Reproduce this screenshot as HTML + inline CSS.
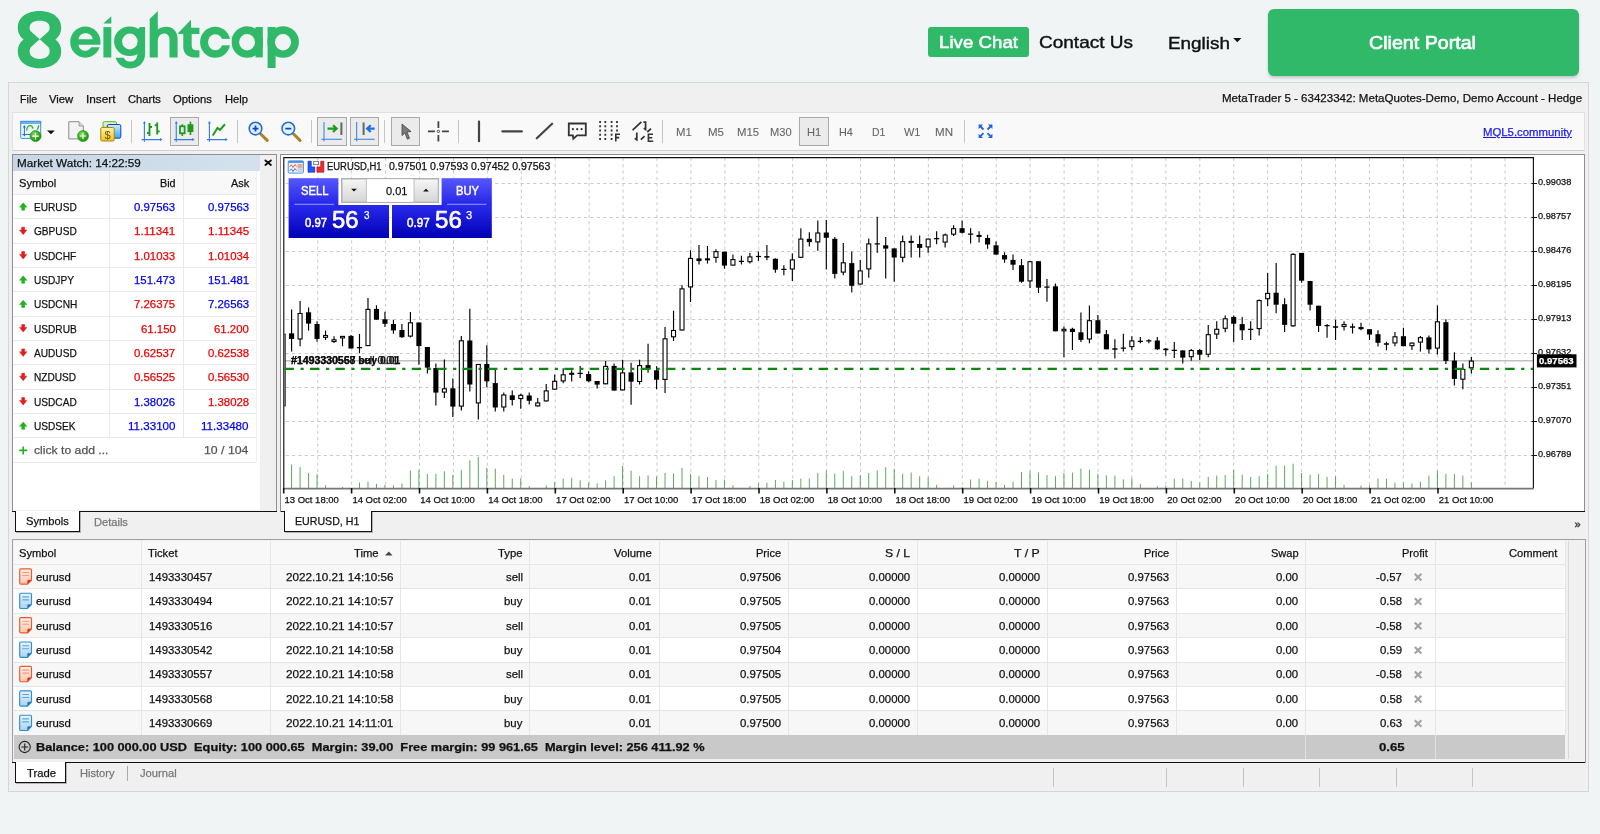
<!DOCTYPE html>
<html><head><meta charset="utf-8"><style>
html,body{margin:0;padding:0;}
body{width:1600px;height:834px;position:relative;overflow:hidden;background:#f0f4f5;font-family:"Liberation Sans",sans-serif;}
.t{position:absolute;white-space:pre;line-height:1;transform-origin:0 0;-webkit-text-stroke:0.25px currentColor;}
svg{display:block}
</style></head><body><div id="root" style="position:absolute;left:0;top:0;width:1600px;height:834px;will-change:transform;">
<svg style="position:absolute;left:0px;top:0px" width="320" height="80" viewBox="0 0 320 80"><g fill="#31b96a">
<path fill-rule="evenodd" d="M23.6,39.5 C18.5,35.5 17.8,31 17.8,27.5 C17.8,17 27.5,10.9 39.5,10.9 C51.5,10.9 61.2,17 61.2,27.5 C61.2,31 60.5,35.5 55.4,39.5 C60.5,43.5 61.2,48 61.2,51.5 C61.2,62 51.5,68.2 39.5,68.2 C27.5,68.2 17.8,62 17.8,51.5 C17.8,48 18.5,43.5 23.6,39.5 Z
M39.7,39.3 L31.3,31.8 C29,29.5 29.2,25.5 31.2,23.4 C33.5,21 36.5,20.7 39.6,20.7 C42.7,20.7 45.8,21 48.1,23.4 C50.1,25.5 50.3,29.5 48.1,31.8 Z
M39.7,39.3 L31.3,46.8 C29,49 29.2,53.6 31.2,55.8 C33.5,58.3 36.5,59 39.6,59 C42.7,59 45.8,58.3 48.1,55.8 C50.1,53.6 50.3,49 48.1,46.8 Z"/>
<ellipse cx="85.35" cy="42.05" rx="15.15" ry="15.65"/>
<rect x="103.4" y="27.1" width="7.9" height="30.4"/>
<path d="M103.4,23.5 L111.3,23.5 L111.3,16.2 Z"/>
<ellipse cx="129.6" cy="41.2" rx="15.5" ry="14.8"/>
<path d="M137.3,30 L140.2,27.1 H145.1 V54 C145.1,63 138,68.5 130,68.5 C123,68.5 117.5,64 115.6,57.7 H123.6 C125,60.3 127.5,61.6 130.2,61.6 C134.5,61.6 137.3,58.5 137.3,54.4 Z"/>
<path d="M149.7,19.1 L157.8,11 V29.5 C159.8,27.6 163,26.8 166.3,26.8 C172.8,26.8 177.6,31.5 177.6,38.5 V57.4 H169.5 V39.5 C169.5,35.7 167.4,33.5 164.3,33.5 C160.5,33.5 157.8,36.5 157.8,41 V57.4 H149.7 Z"/>
<path d="M178.2,33.9 V32.9 L191,19.8 V27.8 H199.4 V33.9 H191.7 V45.6 C191.7,48.5 193,50.3 195.7,50.3 H199.4 V57.4 H194 C187.5,57.4 183.3,53 183.3,47 V33.9 Z"/>
<ellipse cx="215.2" cy="42.25" rx="15.1" ry="15.45"/>
<ellipse cx="247.3" cy="42" rx="15.8" ry="15.75"/>
<rect x="255.5" y="27" width="7.3" height="30.4"/>
<ellipse cx="283.1" cy="42" rx="15.8" ry="15.75"/>
<rect x="267.6" y="27" width="8" height="41"/>
</g>
<g fill="#f0f4f5">
<path d="M78.6,39.2 C78.6,35.8 81.8,33.2 85.6,33.2 C89.4,33.2 92.6,35.8 92.6,39.2 Z"/>
<path d="M78.6,44.7 H101 V47.3 H91.2 C89.8,49.5 87.8,50.8 85.5,50.8 C81.8,50.8 78.6,48.2 78.6,44.7 Z"/>
<ellipse cx="129.85" cy="41.5" rx="7.75" ry="7.9"/>
<ellipse cx="215.35" cy="42.25" rx="7.3" ry="8.05"/>
<rect x="221.5" y="38.9" width="10" height="6.4"/>
<ellipse cx="247.05" cy="42.2" rx="7.95" ry="8.2"/>
<ellipse cx="283" cy="42.2" rx="8.1" ry="8.2"/>
</g></svg>
<div style="position:absolute;left:928px;top:26.7px;width:101px;height:30.8px;background:#31b96a;border-radius:3px;"></div>
<span class="t" style="left:939.40px;top:35.00px;font-size:16.6px;color:#fff;transform:scaleX(1.1265);-webkit-text-stroke:0.5px #fff;">Live Chat</span>
<span class="t" style="left:1038.70px;top:35.00px;font-size:16.6px;color:#111;transform:scaleX(1.1448);-webkit-text-stroke:0.4px #111;">Contact Us</span>
<span class="t" style="left:1167.90px;top:36.00px;font-size:16.6px;color:#111;transform:scaleX(1.1387);-webkit-text-stroke:0.4px #111;">English</span>
<svg style="position:absolute;left:1230px;top:35px" width="14" height="10" viewBox="1230 35 14 10"><path d="M1233.2,38 L1241.4,38 L1237.3,42.2 Z" fill="#111"/></svg>
<div style="position:absolute;left:1267.5px;top:9px;width:311.5px;height:66.5px;background:#31b96a;border-radius:6px;box-shadow:0 2px 3px rgba(0,0,0,0.18);"></div>
<span class="t" style="left:1369.30px;top:34.00px;font-size:18.4px;color:#fff;transform:scaleX(1.0676);-webkit-text-stroke:0.6px #fff;">Client Portal</span>
<div style="position:absolute;left:7.5px;top:82px;width:1579.5px;height:708px;background:#f0f0f0;border:1px solid #d6d6d6;"></div>
<span class="t" style="left:19.80px;top:93.00px;font-size:11.6px;color:#111;transform:scaleX(0.9202);">File</span>
<span class="t" style="left:49.20px;top:93.00px;font-size:11.6px;color:#111;transform:scaleX(0.9705);">View</span>
<span class="t" style="left:86.10px;top:93.00px;font-size:11.6px;color:#111;transform:scaleX(1.0203);">Insert</span>
<span class="t" style="left:128.00px;top:93.00px;font-size:11.6px;color:#111;transform:scaleX(0.9629);">Charts</span>
<span class="t" style="left:173.00px;top:93.00px;font-size:11.6px;color:#111;transform:scaleX(0.9756);">Options</span>
<span class="t" style="left:224.70px;top:93.00px;font-size:11.6px;color:#111;transform:scaleX(0.9682);">Help</span>
<span class="t" style="left:1221.50px;top:92.00px;font-size:11.6px;color:#111;transform:scaleX(0.9955);">MetaTrader 5 - 63423342: MetaQuotes-Demo, Demo Account - Hedge</span>
<div style="position:absolute;left:12px;top:112px;width:1571px;height:36.5px;background:#f9f9f9;border:1px solid #e1e1e1;border-bottom:1px solid #d0d0d0;"></div>
<div style="position:absolute;left:170px;top:117px;width:26.75px;height:27px;background:#ebebeb;border:1px solid #a9a9a9;"></div>
<div style="position:absolute;left:317.2px;top:117px;width:27.5px;height:27px;background:#ebebeb;border:1px solid #a9a9a9;"></div>
<div style="position:absolute;left:350.2px;top:117px;width:26.600000000000023px;height:27px;background:#ebebeb;border:1px solid #a9a9a9;"></div>
<div style="position:absolute;left:391.1px;top:117px;width:26.69999999999999px;height:27px;background:#ebebeb;border:1px solid #a9a9a9;"></div>
<div style="position:absolute;left:799.3px;top:117px;width:27.300000000000068px;height:27px;background:#ebebeb;border:1px solid #a9a9a9;"></div>
<div style="position:absolute;left:130.8px;top:120px;width:1px;height:23px;background:#c6c6c6;"></div>
<div style="position:absolute;left:237.1px;top:120px;width:1px;height:23px;background:#c6c6c6;"></div>
<div style="position:absolute;left:310.7px;top:120px;width:1px;height:23px;background:#c6c6c6;"></div>
<div style="position:absolute;left:384.1px;top:120px;width:1px;height:23px;background:#c6c6c6;"></div>
<div style="position:absolute;left:458.0px;top:120px;width:1px;height:23px;background:#c6c6c6;"></div>
<div style="position:absolute;left:662.0px;top:120px;width:1px;height:23px;background:#c6c6c6;"></div>
<div style="position:absolute;left:964.2px;top:120px;width:1px;height:23px;background:#c6c6c6;"></div>
<svg style="position:absolute;left:12px;top:113px" width="1000" height="36" viewBox="12 113 1000 36">
<!-- new chart -->
<defs><radialGradient id="gc" cx="0.4" cy="0.35" r="0.7"><stop offset="0" stop-color="#8ee05a"/><stop offset="0.6" stop-color="#2fa81f"/><stop offset="1" stop-color="#1b8a12"/></radialGradient></defs>
<rect x="20.7" y="121.4" width="20" height="17" rx="1" fill="#edf5fc" stroke="#3a8ee6" stroke-width="1"/>
<rect x="20.2" y="120.9" width="21" height="2.8" fill="#3a8ee6"/>
<rect x="21.2" y="121.9" width="19" height="0.8" fill="#8fc0f2"/>
<path d="M24.4,126 V135.6 M22.4,134.5 H32.5" stroke="#2a6fc9" stroke-width="1.05" fill="none"/>
<path d="M22.9,127.4 L24.4,125 L25.9,127.4 Z M22.9,134.3 L24.4,136.6 L25.9,134.3 Z" fill="#2a6fc9"/>
<path d="M26.6,130.6 C27,126.5 29,125.6 30.2,125.6 C31.6,125.6 32.6,126.8 33.1,128.6 M37.3,129.8 L38.9,125.3" stroke="#3cae28" stroke-width="1.35" fill="none"/>
<circle cx="35.5" cy="136.1" r="5.5" fill="url(#gc)" stroke="#1f8f18" stroke-width="0.6"/>
<path d="M35.5,132.8 V139.4 M32.2,136.1 H38.8" stroke="#fff" stroke-width="1.1"/>
<path d="M47,130.5 L54.9,130.5 L50.95,134.3 Z" fill="#111"/>
<!-- new doc -->
<path d="M68.8,121.7 H79 L83.3,126 V138.9 H68.8 Z" fill="#f3f3f3" stroke="#8a8a8a" stroke-width="1"/>
<path d="M79,121.7 V126 H83.3" fill="#ddd" stroke="#8a8a8a" stroke-width="0.8"/>
<circle cx="83" cy="136" r="5.5" fill="url(#gc)" stroke="#1f8f18" stroke-width="0.6"/>
<path d="M83,132.7 V139.3 M79.7,136 H86.3" stroke="#fff" stroke-width="1.1"/>
<!-- dollar -->
<defs>
<linearGradient id="gy" x1="0" y1="0" x2="0" y2="1"><stop offset="0" stop-color="#fff3a8"/><stop offset="1" stop-color="#f2c21a"/></linearGradient>
<linearGradient id="gbl" x1="0" y1="0" x2="0" y2="1"><stop offset="0" stop-color="#c8f0ff"/><stop offset="1" stop-color="#3aa6f0"/></linearGradient>
<linearGradient id="ggr" x1="0" y1="0" x2="0" y2="1"><stop offset="0" stop-color="#e2f7d6"/><stop offset="1" stop-color="#9fdc84"/></linearGradient>
</defs>
<rect x="103" y="121.7" width="13.5" height="10.5" rx="1.5" fill="url(#ggr)" stroke="#4cb53a" stroke-width="1"/>
<rect x="107.3" y="124.5" width="13.5" height="13.7" rx="1.5" fill="url(#gbl)" stroke="#1f3fb0" stroke-width="1"/>
<rect x="100.75" y="127.5" width="13.5" height="13.5" rx="1.5" fill="url(#gy)" stroke="#a8841a" stroke-width="1"/>
<text x="107.5" y="138.8" font-size="11" font-family="Liberation Sans" fill="#6b5410" text-anchor="middle">$</text>
<!-- bar chart -->
<g stroke="#2f7de6" stroke-width="1.1" fill="#2f7de6">
<path d="M144.4,122 V141.7 M141.6,139.6 H161.5" fill="none"/>
<path d="M142.9,123.5 L144.4,121 L145.9,123.5 Z M160,138.1 L162.5,139.6 L160,141.1 Z" stroke="none"/>
</g>
<path d="M149.5,123 V136 M147,133 H149.5 M149.5,127 H152 M157.2,122.4 V134.6 M154.7,125.2 H157.2 M157.2,131.4 H159.7" stroke="#1f9a1f" stroke-width="1.9" fill="none"/>
<!-- candle chart -->
<g stroke="#2f7de6" stroke-width="1.1" fill="#2f7de6">
<path d="M176.25,122 V141.7 M174,139.6 H193.5" fill="none"/>
<path d="M174.75,123.5 L176.25,121 L177.75,123.5 Z M192.2,138.1 L194.7,139.6 L192.2,141.1 Z" stroke="none"/>
</g>
<path d="M182.3,124.2 V136" stroke="#1f9a1f" stroke-width="1.6"/>
<rect x="180" y="126.3" width="4.6" height="7" fill="#ebebeb" stroke="#1f9a1f" stroke-width="1.8"/>
<path d="M190.45,121.7 V135" stroke="#1f9a1f" stroke-width="1.6"/>
<rect x="187.5" y="124.25" width="5.9" height="7.8" fill="#1f9a1f"/>
<!-- line chart -->
<g stroke="#2f7de6" stroke-width="1.1" fill="#2f7de6">
<path d="M209.4,122 V141.7 M207,139.6 H226.8" fill="none"/>
<path d="M207.9,123.5 L209.4,121 L210.9,123.5 Z M225.3,138.1 L227.8,139.6 L225.3,141.1 Z" stroke="none"/>
</g>
<path d="M212.8,135.5 L217.5,128 L220,129.9 L225,124.25" stroke="#1f9a1f" stroke-width="2" fill="none"/>
<!-- zoom in/out -->
<path d="M260.5,133.8 L267.2,140.4 M293.3,133.8 L300,140.4" stroke="#a9822a" stroke-width="3" stroke-linecap="round"/>
<circle cx="255.5" cy="128.6" r="6.3" fill="#e3f1fb" stroke="#1f6fd8" stroke-width="1.6"/>
<circle cx="288.3" cy="128.6" r="6.3" fill="#e3f1fb" stroke="#1f6fd8" stroke-width="1.6"/>
<path d="M252.5,128.6 H258.5 M255.5,125.6 V131.6 M285.3,128.6 H291.3" stroke="#1245b8" stroke-width="1.8"/>
<!-- scroll buttons -->
<g stroke="#2f7de6" stroke-width="1" fill="none">
<path d="M324,122 V141.4 M321.3,139.25 H341.9 M356.7,122 V141.4 M354,139.25 H374.6"/>
</g>
<path d="M327.5,128.6 H336 M333,125.2 L336.6,128.6 L333,132" stroke="#1a9e1a" stroke-width="2.2" fill="none"/>
<path d="M341.4,122.5 V135" stroke="#666" stroke-width="2"/>
<path d="M363.6,122.5 V135" stroke="#666" stroke-width="2"/>
<path d="M374.7,128.6 H367.5 M370.7,125.2 L367.1,128.6 L370.7,132" stroke="#1f6fe0" stroke-width="2.2" fill="none"/>
<!-- cursor -->
<path d="M402,124 L411,131.5 L407,132 L409.5,138.3 L407.4,139.2 L404.9,133 L402,135.6 Z" fill="#7a7a7a" stroke="#444" stroke-width="0.8"/>
<!-- crosshair -->
<path d="M438.4,121.3 V127.9 M438.4,134.9 V141.4 M427.9,131.4 H434.9 M441.9,131.4 H448.9" stroke="#444" stroke-width="1.8"/>
<circle cx="438.4" cy="131.4" r="1.2" fill="none" stroke="#444" stroke-width="1"/>
<!-- lines -->
<path d="M479,121.5 V141.2 M502.4,131.4 H521.8 M536.8,138.2 L552.1,123.7" stroke="#444" stroke-width="2.2" stroke-linecap="round"/>
<!-- bubble -->
<path d="M568.8,123.5 H585.8 V135.4 H577.2 L573.3,138.8 L572.9,135.4 H568.8 Z" fill="none" stroke="#333" stroke-width="1.8"/>
<g fill="#333"><circle cx="572.9" cy="129.2" r="1.1"/><circle cx="577.2" cy="129.2" r="1.1"/><circle cx="581.6" cy="129.2" r="1.1"/></g>
<!-- fib -->
<path d="M600.1,121 V141 M605.3,121 V141 M611.6,121 V141 M617,121 V131.5" stroke="#333" stroke-width="1.8" stroke-dasharray="2.05,2.18"/>
<path d="M615.8,141.5 V134.2 H620 M615.8,137.6 H619.3" stroke="#333" stroke-width="1.6" fill="none"/>
<!-- elliott -->
<path d="M632.6,130.2 L641.4,121.9 M643.4,122.2 H645.6 V129.6 L643.8,128.2 M651,128.7 L647.3,132 M636.8,132.4 V139.8 L634.8,138.3 M640.8,139.6 L644.6,136.1" stroke="#333" stroke-width="1.7" fill="none"/>
<path d="M653.2,141.3 H648.4 V134.2 H653 M648.4,137.7 H652.3" stroke="#333" stroke-width="1.6" fill="none"/>
<!-- fullscreen -->
<g stroke="#1f63e0" stroke-width="1.8" fill="#1f63e0">
<path d="M979.5,125.5 L983.5,129.5 M991.5,125.5 L987.5,129.5 M979.5,137.2 L983.5,133.2 M991.5,137.2 L987.5,133.2" fill="none"/>
<path d="M978.6,124.6 H983 L978.6,129 Z M992.4,124.6 H988 L992.4,129 Z M978.6,138.1 H983 L978.6,133.7 Z M992.4,138.1 H988 L992.4,133.7 Z" stroke="none"/>
</g>
</svg>
<span class="t" style="left:675.70px;top:127.00px;font-size:11.5px;color:#666;transform:scaleX(0.9890);-webkit-text-stroke:0.1px #666;">M1</span>
<span class="t" style="left:708.00px;top:127.00px;font-size:11.5px;color:#666;-webkit-text-stroke:0.1px #666;">M5</span>
<span class="t" style="left:737.40px;top:127.00px;font-size:11.5px;color:#666;transform:scaleX(0.9878);-webkit-text-stroke:0.1px #666;">M15</span>
<span class="t" style="left:770.40px;top:127.00px;font-size:11.5px;color:#666;transform:scaleX(0.9655);-webkit-text-stroke:0.1px #666;">M30</span>
<span class="t" style="left:806.60px;top:127.00px;font-size:11.5px;color:#666;transform:scaleX(0.9659);-webkit-text-stroke:0.1px #666;">H1</span>
<span class="t" style="left:839.40px;top:127.00px;font-size:11.5px;color:#666;transform:scaleX(0.9455);-webkit-text-stroke:0.1px #666;">H4</span>
<span class="t" style="left:872.40px;top:127.00px;font-size:11.5px;color:#666;transform:scaleX(0.9115);-webkit-text-stroke:0.1px #666;">D1</span>
<span class="t" style="left:904.00px;top:127.00px;font-size:11.5px;color:#666;transform:scaleX(0.9507);-webkit-text-stroke:0.1px #666;">W1</span>
<span class="t" style="left:935.00px;top:127.00px;font-size:11.5px;color:#666;transform:scaleX(1.0064);-webkit-text-stroke:0.1px #666;">MN</span>
<span class="t" style="left:1483.00px;top:127.00px;font-size:11.5px;color:#1a1aee;transform:scaleX(0.9877);text-decoration:underline;">MQL5.community</span>
<div style="position:absolute;left:12px;top:154px;width:263px;height:356.5px;background:#f0f0f0;border:1px solid #8f8f8f;border-bottom:none;"></div>
<div style="position:absolute;left:13px;top:155px;width:247px;height:355px;background:#fff;"></div>
<div style="position:absolute;left:13px;top:155px;width:247px;height:15.5px;background:linear-gradient(to right,#c8d7e7,#d4e1ed);"></div>
<span class="t" style="left:17.20px;top:158.00px;font-size:11.5px;color:#111;transform:scaleX(1.0183);">Market Watch: 14:22:59</span>
<svg style="position:absolute;left:262px;top:157px" width="12" height="12" viewBox="262 157 12 12"><path d="M265.4,160.4 L270.9,165 M270.9,160.4 L265.4,165" stroke="#111" stroke-width="1.9" stroke-linecap="round"/></svg>
<div style="position:absolute;left:13px;top:170.5px;width:242.5px;height:24px;background:#f8f8f8;"></div>
<div style="position:absolute;left:13px;top:193.9px;width:242.5px;height:1px;background:#e9e9e9;"></div>
<div style="position:absolute;left:13px;top:218.25px;width:242.5px;height:1px;background:#e9e9e9;"></div>
<div style="position:absolute;left:13px;top:242.60000000000002px;width:242.5px;height:1px;background:#e9e9e9;"></div>
<div style="position:absolute;left:13px;top:266.95000000000005px;width:242.5px;height:1px;background:#e9e9e9;"></div>
<div style="position:absolute;left:13px;top:291.3px;width:242.5px;height:1px;background:#e9e9e9;"></div>
<div style="position:absolute;left:13px;top:315.65px;width:242.5px;height:1px;background:#e9e9e9;"></div>
<div style="position:absolute;left:13px;top:340.0px;width:242.5px;height:1px;background:#e9e9e9;"></div>
<div style="position:absolute;left:13px;top:364.35px;width:242.5px;height:1px;background:#e9e9e9;"></div>
<div style="position:absolute;left:13px;top:388.70000000000005px;width:242.5px;height:1px;background:#e9e9e9;"></div>
<div style="position:absolute;left:13px;top:413.05px;width:242.5px;height:1px;background:#e9e9e9;"></div>
<div style="position:absolute;left:13px;top:437.4px;width:242.5px;height:1px;background:#e9e9e9;"></div>
<div style="position:absolute;left:13px;top:461.75px;width:242.5px;height:1px;background:#e9e9e9;"></div>
<div style="position:absolute;left:108.5px;top:170.5px;width:1px;height:267.4px;background:#e9e9e9;"></div>
<div style="position:absolute;left:182.5px;top:170.5px;width:1px;height:267.4px;background:#e9e9e9;"></div>
<div style="position:absolute;left:255.5px;top:170.5px;width:1px;height:291.75px;background:#efefef;"></div>
<span class="t" style="left:19.00px;top:178.00px;font-size:11.5px;color:#111;transform:scaleX(0.9680);">Symbol</span>
<span class="t" style="left:159.99px;top:178.00px;font-size:11.5px;color:#111;transform:scaleX(0.9392);">Bid</span>
<span class="t" style="left:230.56px;top:178.00px;font-size:11.5px;color:#111;transform:scaleX(0.9460);">Ask</span>
<span class="t" style="left:34.30px;top:202.00px;font-size:11.5px;color:#111;transform:scaleX(0.8800);">EURUSD</span>
<span class="t" style="left:134.45px;top:202.00px;font-size:11.5px;color:#0000ee;transform:scaleX(0.9900);">0.97563</span>
<span class="t" style="left:207.55px;top:202.00px;font-size:11.5px;color:#0000ee;transform:scaleX(0.9900);">0.97563</span>
<span class="t" style="left:34.30px;top:226.00px;font-size:11.5px;color:#111;transform:scaleX(0.8800);">GBPUSD</span>
<span class="t" style="left:134.45px;top:226.00px;font-size:11.5px;color:#ee0000;transform:scaleX(1.0108);">1.11341</span>
<span class="t" style="left:207.55px;top:226.00px;font-size:11.5px;color:#ee0000;transform:scaleX(1.0108);">1.11345</span>
<span class="t" style="left:34.30px;top:251.00px;font-size:11.5px;color:#111;transform:scaleX(0.8800);">USDCHF</span>
<span class="t" style="left:134.45px;top:251.00px;font-size:11.5px;color:#ee0000;transform:scaleX(0.9900);">1.01033</span>
<span class="t" style="left:207.55px;top:251.00px;font-size:11.5px;color:#ee0000;transform:scaleX(0.9900);">1.01034</span>
<span class="t" style="left:34.30px;top:275.00px;font-size:11.5px;color:#111;transform:scaleX(0.8800);">USDJPY</span>
<span class="t" style="left:134.45px;top:275.00px;font-size:11.5px;color:#0000ee;transform:scaleX(0.9900);">151.473</span>
<span class="t" style="left:207.55px;top:275.00px;font-size:11.5px;color:#0000ee;transform:scaleX(0.9900);">151.481</span>
<span class="t" style="left:34.30px;top:299.00px;font-size:11.5px;color:#111;transform:scaleX(0.8800);">USDCNH</span>
<span class="t" style="left:134.45px;top:299.00px;font-size:11.5px;color:#ee0000;transform:scaleX(0.9900);">7.26375</span>
<span class="t" style="left:207.55px;top:299.00px;font-size:11.5px;color:#0000ee;transform:scaleX(0.9900);">7.26563</span>
<span class="t" style="left:34.30px;top:324.00px;font-size:11.5px;color:#111;transform:scaleX(0.8800);">USDRUB</span>
<span class="t" style="left:140.78px;top:324.00px;font-size:11.5px;color:#ee0000;transform:scaleX(0.9900);">61.150</span>
<span class="t" style="left:213.88px;top:324.00px;font-size:11.5px;color:#ee0000;transform:scaleX(0.9900);">61.200</span>
<span class="t" style="left:34.30px;top:348.00px;font-size:11.5px;color:#111;transform:scaleX(0.8800);">AUDUSD</span>
<span class="t" style="left:134.45px;top:348.00px;font-size:11.5px;color:#ee0000;transform:scaleX(0.9900);">0.62537</span>
<span class="t" style="left:207.55px;top:348.00px;font-size:11.5px;color:#ee0000;transform:scaleX(0.9900);">0.62538</span>
<span class="t" style="left:34.30px;top:372.00px;font-size:11.5px;color:#111;transform:scaleX(0.8800);">NZDUSD</span>
<span class="t" style="left:134.45px;top:372.00px;font-size:11.5px;color:#ee0000;transform:scaleX(0.9900);">0.56525</span>
<span class="t" style="left:207.55px;top:372.00px;font-size:11.5px;color:#ee0000;transform:scaleX(0.9900);">0.56530</span>
<span class="t" style="left:34.30px;top:397.00px;font-size:11.5px;color:#111;transform:scaleX(0.8800);">USDCAD</span>
<span class="t" style="left:134.45px;top:397.00px;font-size:11.5px;color:#0000ee;transform:scaleX(0.9900);">1.38026</span>
<span class="t" style="left:207.55px;top:397.00px;font-size:11.5px;color:#ee0000;transform:scaleX(0.9900);">1.38028</span>
<span class="t" style="left:34.30px;top:421.00px;font-size:11.5px;color:#111;transform:scaleX(0.8800);">USDSEK</span>
<span class="t" style="left:128.11px;top:421.00px;font-size:11.5px;color:#0000ee;transform:scaleX(1.0079);">11.33100</span>
<span class="t" style="left:201.21px;top:421.00px;font-size:11.5px;color:#0000ee;transform:scaleX(1.0079);">11.33480</span>
<svg style="position:absolute;left:12px;top:190px" width="20" height="280" viewBox="12 190 20 280"><path d="M23.2,202.80 L26.9,207.20 L24.7,207.20 L24.7,210.20 L21.7,210.20 L21.7,207.20 L19.5,207.20 Z" fill="#1fb11f" stroke="#1fb11f" stroke-width="0.5" stroke-linejoin="round"/><path d="M23.2,234.65 L26.9,230.05 L24.7,230.05 L24.7,227.15 L21.7,227.15 L21.7,230.05 L19.5,230.05 Z" fill="#e01e1e" stroke="#e01e1e" stroke-width="0.5" stroke-linejoin="round"/><path d="M23.2,259.00 L26.9,254.40 L24.7,254.40 L24.7,251.50 L21.7,251.50 L21.7,254.40 L19.5,254.40 Z" fill="#e01e1e" stroke="#e01e1e" stroke-width="0.5" stroke-linejoin="round"/><path d="M23.2,275.85 L26.9,280.25 L24.7,280.25 L24.7,283.25 L21.7,283.25 L21.7,280.25 L19.5,280.25 Z" fill="#1fb11f" stroke="#1fb11f" stroke-width="0.5" stroke-linejoin="round"/><path d="M23.2,300.20 L26.9,304.60 L24.7,304.60 L24.7,307.60 L21.7,307.60 L21.7,304.60 L19.5,304.60 Z" fill="#1fb11f" stroke="#1fb11f" stroke-width="0.5" stroke-linejoin="round"/><path d="M23.2,332.05 L26.9,327.45 L24.7,327.45 L24.7,324.55 L21.7,324.55 L21.7,327.45 L19.5,327.45 Z" fill="#e01e1e" stroke="#e01e1e" stroke-width="0.5" stroke-linejoin="round"/><path d="M23.2,356.40 L26.9,351.80 L24.7,351.80 L24.7,348.90 L21.7,348.90 L21.7,351.80 L19.5,351.80 Z" fill="#e01e1e" stroke="#e01e1e" stroke-width="0.5" stroke-linejoin="round"/><path d="M23.2,380.75 L26.9,376.15 L24.7,376.15 L24.7,373.25 L21.7,373.25 L21.7,376.15 L19.5,376.15 Z" fill="#e01e1e" stroke="#e01e1e" stroke-width="0.5" stroke-linejoin="round"/><path d="M23.2,405.10 L26.9,400.50 L24.7,400.50 L24.7,397.60 L21.7,397.60 L21.7,400.50 L19.5,400.50 Z" fill="#e01e1e" stroke="#e01e1e" stroke-width="0.5" stroke-linejoin="round"/><path d="M23.2,421.95 L26.9,426.35 L24.7,426.35 L24.7,429.35 L21.7,429.35 L21.7,426.35 L19.5,426.35 Z" fill="#1fb11f" stroke="#1fb11f" stroke-width="0.5" stroke-linejoin="round"/><path d="M23.2,446.4 V454.4 M19.2,450.4 H27.2" stroke="#22b022" stroke-width="1.6"/></svg>
<span class="t" style="left:34.00px;top:445.00px;font-size:11.5px;color:#555;transform:scaleX(1.0595);">click to add ...</span>
<span class="t" style="left:204.29px;top:445.00px;font-size:11.5px;color:#555;transform:scaleX(1.0684);">10 / 104</span>
<div style="position:absolute;left:12px;top:511px;width:264.5px;height:1.2px;background:#111;"></div>
<div style="position:absolute;left:15.3px;top:511px;width:63px;height:20px;background:#fff;border:1px solid #111;border-top:none;box-shadow:1px 1px 0 rgba(0,0,0,0.25);"></div>
<span class="t" style="left:26.40px;top:516.00px;font-size:11.5px;color:#111;transform:scaleX(0.9709);">Symbols</span>
<span class="t" style="left:94.00px;top:517.00px;font-size:11.5px;color:#777;transform:scaleX(0.9640);">Details</span>
<div style="position:absolute;left:280px;top:154px;width:1303px;height:356.5px;background:#fff;border:1px solid #8f8f8f;border-bottom:none;"></div>
<div style="position:absolute;left:280.5px;top:511px;width:1304.5px;height:1.2px;background:#111;"></div>
<div style="position:absolute;left:283.5px;top:511px;width:86px;height:20px;background:#fff;border:1px solid #111;border-top:none;box-shadow:1px 1px 0 rgba(0,0,0,0.25);"></div>
<span class="t" style="left:295.00px;top:516.00px;font-size:11.5px;color:#111;transform:scaleX(0.9236);">EURUSD, H1</span>
<span class="t" style="left:1574.58px;top:519.00px;font-size:11px;color:#222;">»</span>
<svg style="position:absolute;left:281px;top:155px" width="1303" height="356" viewBox="281 155 1303 356"><defs><clipPath id="pc"><rect x="284.3" y="158.3" width="1248.7" height="330"/></clipPath></defs><g stroke="#c9c9c9" stroke-width="1" stroke-dasharray="3.1,3.25"><path d="M1505.10,157.8 V488"/><path d="M1471.18,157.8 V488"/><path d="M1437.25,157.8 V488"/><path d="M1403.33,157.8 V488"/><path d="M1369.40,157.8 V488"/><path d="M1335.48,157.8 V488"/><path d="M1301.56,157.8 V488"/><path d="M1267.63,157.8 V488"/><path d="M1233.71,157.8 V488"/><path d="M1199.78,157.8 V488"/><path d="M1165.86,157.8 V488"/><path d="M1131.94,157.8 V488"/><path d="M1098.01,157.8 V488"/><path d="M1064.09,157.8 V488"/><path d="M1030.16,157.8 V488"/><path d="M996.24,157.8 V488"/><path d="M962.32,157.8 V488"/><path d="M928.39,157.8 V488"/><path d="M894.47,157.8 V488"/><path d="M860.54,157.8 V488"/><path d="M826.62,157.8 V488"/><path d="M792.70,157.8 V488"/><path d="M758.77,157.8 V488"/><path d="M724.85,157.8 V488"/><path d="M690.92,157.8 V488"/><path d="M657.00,157.8 V488"/><path d="M623.08,157.8 V488"/><path d="M589.15,157.8 V488"/><path d="M555.23,157.8 V488"/><path d="M521.30,157.8 V488"/><path d="M487.38,157.8 V488"/><path d="M453.46,157.8 V488"/><path d="M419.53,157.8 V488"/><path d="M385.61,157.8 V488"/><path d="M351.68,157.8 V488"/><path d="M317.76,157.8 V488"/><path d="M285.65,183.5 H1533"/><path d="M285.65,217.5 H1533"/><path d="M285.65,251.5 H1533"/><path d="M285.65,285.5 H1533"/><path d="M285.65,319.5 H1533"/><path d="M285.65,353.5 H1533"/><path d="M285.65,387.5 H1533"/><path d="M285.65,421.5 H1533"/><path d="M285.65,455.5 H1533"/></g><path d="M291.59,488 V464.6M300.08,488 V467.2M308.56,488 V473M317.05,488 V474.2M325.54,488 V485.3M342.51,488 V487M359.49,488 V482.6M367.98,488 V481.8M376.46,488 V483.9M384.95,488 V484.9M393.44,488 V485.3M401.93,488 V483.5M410.41,488 V470.4M418.90,488 V469.9M427.39,488 V473.9M435.88,488 V473.9M444.36,488 V471.3M452.85,488 V474.8M461.34,488 V469.9M469.83,488 V460.4M478.31,488 V456.9M486.80,488 V467.8M495.29,488 V468.6M503.78,488 V474.8M512.26,488 V478.6M520.75,488 V478.3M529.24,488 V486.1M537.73,488 V487.9M546.21,488 V485.3M554.70,488 V482.1M563.19,488 V478.6M571.68,488 V477.9M580.16,488 V480.4M588.65,488 V482.6M597.14,488 V483.2M605.62,488 V480.4M614.11,488 V476.2M622.60,488 V466M631.09,488 V470.7M639.58,488 V476.2M648.06,488 V475.3M656.55,488 V476.5M665.04,488 V473M673.53,488 V473.5M682.01,488 V467.8M690.50,488 V473.9M698.99,488 V476.2M707.48,488 V477M715.96,488 V480M724.45,488 V479.7M732.94,488 V485.3M741.43,488 V487.9M749.91,488 V486.1M758.40,488 V483.2M766.89,488 V482.6M775.38,488 V480M783.86,488 V481.8M792.35,488 V480M800.84,488 V478.6M809.33,488 V478.6M817.81,488 V473M826.30,488 V470.7M834.79,488 V473.5M843.28,488 V470.9M851.76,488 V476.2M860.25,488 V475.3M868.74,488 V473M877.23,488 V470.4M885.71,488 V467.2M894.20,488 V469.2M902.69,488 V473.9M911.18,488 V472.5M919.66,488 V476.2M928.15,488 V477.4M936.64,488 V484.9M945.13,488 V487.9M953.61,488 V485.3M962.10,488 V487M970.59,488 V479.5M979.08,488 V478.6M987.56,488 V480.9M996.05,488 V482.1M1004.54,488 V484.9M1013.03,488 V481.8M1021.51,488 V472.1M1030.00,488 V471.3M1038.49,488 V472.5M1046.98,488 V475.1M1055.46,488 V476.2M1063.95,488 V473M1072.44,488 V472.7M1080.93,488 V468.6M1089.41,488 V469.9M1097.90,488 V473.9M1106.39,488 V475.3M1114.88,488 V475.6M1123.36,488 V479.5M1131.85,488 V478.3M1140.34,488 V483.9M1157.31,488 V486.1M1165.80,488 V485.6M1174.29,488 V478.6M1182.78,488 V478.6M1191.26,488 V480.9M1199.75,488 V482.6M1208.24,488 V476.9M1216.73,488 V475.6M1225.21,488 V475.1M1233.70,488 V469.9M1242.19,488 V474.8M1250.68,488 V477M1259.16,488 V476M1267.65,488 V473.9M1276.14,488 V465.7M1284.62,488 V465.7M1293.11,488 V463.7M1301.60,488 V473M1310.09,488 V474.8M1318.58,488 V473.9M1327.06,488 V476.9M1335.55,488 V476.2M1344.04,488 V484.9M1352.53,488 V487.9M1361.01,488 V485.6M1369.50,488 V485.3M1377.99,488 V478.6M1386.47,488 V478.6M1394.96,488 V482.6M1403.45,488 V482.6M1411.94,488 V483.5M1420.43,488 V481.8M1428.91,488 V475.6M1437.40,488 V470.9M1445.89,488 V473.9M1454.38,488 V473.9M1462.86,488 V475.6M1471.35,488 V482.6" stroke="#3f9a3f" stroke-width="1" fill="none" opacity="0.85"/><path d="M285,360.7 H1533" stroke="#c0c0c0" stroke-width="1.4"/><g clip-path="url(#pc)"><path d="M283.10,333.3 V406.3M291.59,309.5 V351.6M300.08,301 V346.3M308.56,307.4 V330.6M317.05,321.3 V341.8M325.54,330.6 V340.1M334.03,336.3 V343.1M342.51,335.9 V346.3M351.00,335 V348.5M359.49,334 V353.3M367.98,298 V346.1M376.46,305.3 V319.7M384.95,311.7 V327M393.44,319.7 V333.8M401.93,324 V338M410.41,312.1 V337.4M418.90,322.5 V364.8M427.39,347 V373.5M435.88,363.5 V405.6M444.36,359.4 V398M452.85,378.6 V416.9M461.34,336 V410.4M469.83,308.8 V391.5M478.31,364 V419.6M486.80,345.3 V387.2M495.29,369 V411.5M503.78,392.4 V411.5M512.26,390.4 V405.6M520.75,393.7 V408.8M529.24,392.4 V404.5M537.73,398 V406.4M546.21,384.1 V401.4M554.70,374.5 V389.7M563.19,368.3 V383.2M571.68,370.2 V381.4M580.16,365.9 V377.9M588.65,371.2 V382.2M597.14,381 V388.4M605.62,361.1 V384.3M614.11,363.5 V390.6M622.60,359.7 V390.4M631.09,362.8 V404.7M639.58,359.7 V384.6M648.06,343.8 V372.8M656.55,366.2 V389.3M665.04,326.9 V393.1M673.53,310.8 V340.9M682.01,285.3 V330.5M690.50,250.2 V302M698.99,245.1 V264.6M707.48,246.1 V263.6M715.96,249.3 V262.7M724.45,251.7 V268.7M732.94,254.5 V265.6M741.43,255.7 V264.6M749.91,253.1 V263.6M758.40,251.5 V260.8M766.89,245.1 V260.3M775.38,258.2 V272.8M783.86,265.2 V275.3M792.35,253.4 V281M800.84,228.2 V257.8M809.33,232.3 V246.4M817.81,220.6 V250.8M826.30,220.1 V269.5M834.79,236.9 V278.5M843.28,243.1 V275.2M851.76,251.4 V292.5M860.25,259.9 V284.5M868.74,238.6 V277.7M877.23,216.7 V252.7M885.71,236.9 V278.5M894.20,248.4 V281.7M902.69,235.4 V262.3M911.18,235.4 V257.5M919.66,235.4 V257.5M928.15,238.6 V252.7M936.64,231.3 V244.3M945.13,233.5 V247.6M953.61,225.2 V235.9M962.10,220.6 V233.5M970.59,228.2 V243.6M979.08,231.3 V242.6M987.56,234.7 V248.8M996.05,241.5 V254.6M1004.54,252.2 V262.8M1013.03,254.6 V270M1021.51,258.9 V282.7M1030.00,261.2 V288.1M1038.49,261.2 V292.9M1046.98,279.1 V301.8M1055.46,283.4 V331.3M1063.95,326.5 V357.2M1072.44,327.7 V350M1080.93,312.6 V342.1M1089.41,305.4 V343.2M1097.90,315 V333.5M1106.39,329.9 V349.3M1114.88,339.2 V358.6M1123.36,333.7 V351.4M1131.85,336.3 V350M1140.34,337 V343.2M1148.83,339.2 V343.2M1157.31,337 V350M1165.80,348.1 V355.8M1174.29,342.1 V357.9M1182.78,350.4 V363.4M1191.26,349 V360.8M1199.75,349 V360M1208.24,325.1 V357.2M1216.73,321.2 V338.9M1225.21,315.5 V332.3M1233.70,315.5 V342.1M1242.19,316.9 V339.9M1250.68,321.2 V339.9M1259.16,299.6 V335.6M1267.65,273 V306.1M1276.14,263 V313.3M1284.62,298.2 V332M1293.11,253.3 V326.7M1301.60,252.9 V282.7M1310.09,281 V310.5M1318.58,305.7 V332M1327.06,324.1 V337.8M1335.55,319.8 V340M1344.04,321.3 V330.6M1352.53,323.4 V333.5M1361.01,322.7 V330.2M1369.50,329.2 V340M1377.99,330.2 V346.4M1386.47,341.7 V350.3M1394.96,332.1 V346.2M1403.45,327.8 V346.2M1411.94,342.6 V350.1M1420.43,336 V351.6M1428.91,335.4 V353.4M1437.40,305.4 V354.6M1445.89,319.2 V364.1M1454.38,352.2 V385.4M1462.86,363.5 V389.3M1471.35,357 V373.4" stroke="#000" stroke-width="1.15" fill="none"/><rect x="281.10" y="334.2" width="4.0" height="71.60" fill="#fff" stroke="#000" stroke-width="1.1"/><rect x="289.04" y="333.3" width="5.1" height="5.60" fill="#000"/><rect x="298.08" y="313.5" width="4.0" height="25.50" fill="#fff" stroke="#000" stroke-width="1.1"/><rect x="306.01" y="312.3" width="5.1" height="11.30" fill="#000"/><rect x="314.50" y="324" width="5.1" height="14.90" fill="#000"/><rect x="323.54" y="335.5" width="4.0" height="1.80" fill="#fff" stroke="#000" stroke-width="1.1"/><rect x="332.03" y="339.8" width="4.0" height="1.70" fill="#fff" stroke="#000" stroke-width="1.1"/><rect x="340.51" y="336.4" width="4.0" height="1.50" fill="#fff" stroke="#000" stroke-width="1.1"/><rect x="348.45" y="335.9" width="5.1" height="12.60" fill="#000"/><path d="M356.89,347.6 H362.09" stroke="#000" stroke-width="1.3"/><rect x="365.98" y="309.4" width="4.0" height="36.20" fill="#fff" stroke="#000" stroke-width="1.1"/><rect x="373.91" y="308.9" width="5.1" height="10.80" fill="#000"/><rect x="382.40" y="319.3" width="5.1" height="4.50" fill="#000"/><rect x="390.89" y="324" width="5.1" height="6.40" fill="#000"/><rect x="399.38" y="330" width="5.1" height="7.20" fill="#000"/><rect x="408.41" y="322.8" width="4.0" height="13.30" fill="#fff" stroke="#000" stroke-width="1.1"/><rect x="416.35" y="322.5" width="5.1" height="23.60" fill="#000"/><rect x="424.84" y="347" width="5.1" height="20.60" fill="#000"/><rect x="433.32" y="368" width="5.1" height="24.60" fill="#000"/><rect x="442.36" y="388.8" width="4.0" height="3.30" fill="#fff" stroke="#000" stroke-width="1.1"/><rect x="450.30" y="388.3" width="5.1" height="18.30" fill="#000"/><rect x="459.34" y="340.8" width="4.0" height="65.30" fill="#fff" stroke="#000" stroke-width="1.1"/><rect x="467.28" y="340.5" width="5.1" height="44.00" fill="#000"/><rect x="476.31" y="364.5" width="4.0" height="38.40" fill="#fff" stroke="#000" stroke-width="1.1"/><rect x="484.25" y="364" width="5.1" height="17.30" fill="#000"/><rect x="492.74" y="383.1" width="5.1" height="24.40" fill="#000"/><rect x="501.78" y="395.0" width="4.0" height="12.00" fill="#fff" stroke="#000" stroke-width="1.1"/><rect x="509.71" y="395.3" width="5.1" height="4.70" fill="#000"/><rect x="518.75" y="395.3" width="4.0" height="3.30" fill="#fff" stroke="#000" stroke-width="1.1"/><rect x="526.69" y="395.5" width="5.1" height="5.30" fill="#000"/><rect x="535.73" y="402.9" width="4.0" height="3.00" fill="#fff" stroke="#000" stroke-width="1.1"/><rect x="544.21" y="390.9" width="4.0" height="10.00" fill="#fff" stroke="#000" stroke-width="1.1"/><rect x="552.70" y="381.3" width="4.0" height="7.90" fill="#fff" stroke="#000" stroke-width="1.1"/><rect x="561.19" y="374.8" width="4.0" height="6.10" fill="#fff" stroke="#000" stroke-width="1.1"/><rect x="569.13" y="372.8" width="5.1" height="2.00" fill="#000"/><path d="M577.56,373.4 H582.76" stroke="#000" stroke-width="1.3"/><rect x="586.10" y="374" width="5.1" height="7.20" fill="#000"/><rect x="594.59" y="381" width="5.1" height="3.60" fill="#000"/><rect x="603.62" y="366.4" width="4.0" height="17.40" fill="#fff" stroke="#000" stroke-width="1.1"/><rect x="611.56" y="365.9" width="5.1" height="24.70" fill="#000"/><rect x="620.60" y="372.9" width="4.0" height="17.00" fill="#fff" stroke="#000" stroke-width="1.1"/><rect x="628.54" y="372.4" width="5.1" height="9.30" fill="#000"/><rect x="637.58" y="365.6" width="4.0" height="15.90" fill="#fff" stroke="#000" stroke-width="1.1"/><rect x="645.51" y="365.1" width="5.1" height="4.40" fill="#000"/><rect x="654.00" y="370.3" width="5.1" height="9.40" fill="#000"/><rect x="663.04" y="338.8" width="4.0" height="40.60" fill="#fff" stroke="#000" stroke-width="1.1"/><rect x="671.53" y="330.5" width="4.0" height="6.30" fill="#fff" stroke="#000" stroke-width="1.1"/><rect x="680.01" y="288.9" width="4.0" height="41.10" fill="#fff" stroke="#000" stroke-width="1.1"/><rect x="688.50" y="258.4" width="4.0" height="28.50" fill="#fff" stroke="#000" stroke-width="1.1"/><rect x="696.44" y="258.4" width="5.1" height="2.70" fill="#000"/><rect x="705.48" y="258.9" width="4.0" height="0.90" fill="#fff" stroke="#000" stroke-width="1.1"/><rect x="713.96" y="251.7" width="4.0" height="5.70" fill="#fff" stroke="#000" stroke-width="1.1"/><rect x="721.90" y="251.7" width="5.1" height="13.90" fill="#000"/><rect x="730.94" y="259.6" width="4.0" height="5.50" fill="#fff" stroke="#000" stroke-width="1.1"/><path d="M738.83,261.4 H744.03" stroke="#000" stroke-width="1.3"/><rect x="747.91" y="256.9" width="4.0" height="4.80" fill="#fff" stroke="#000" stroke-width="1.1"/><rect x="755.85" y="255.9" width="5.1" height="1.20" fill="#000"/><rect x="764.34" y="256.1" width="5.1" height="1.50" fill="#000"/><rect x="772.83" y="258.8" width="5.1" height="10.90" fill="#000"/><path d="M781.26,269.4 H786.46" stroke="#000" stroke-width="1.3"/><rect x="790.35" y="259.9" width="4.0" height="9.10" fill="#fff" stroke="#000" stroke-width="1.1"/><rect x="798.84" y="239.1" width="4.0" height="18.20" fill="#fff" stroke="#000" stroke-width="1.1"/><rect x="806.78" y="238.8" width="5.1" height="3.30" fill="#000"/><rect x="815.81" y="233.0" width="4.0" height="8.90" fill="#fff" stroke="#000" stroke-width="1.1"/><rect x="823.75" y="232.5" width="5.1" height="5.30" fill="#000"/><rect x="832.24" y="238.8" width="5.1" height="35.10" fill="#000"/><rect x="841.28" y="262.8" width="4.0" height="9.30" fill="#fff" stroke="#000" stroke-width="1.1"/><rect x="849.21" y="263.1" width="5.1" height="22.70" fill="#000"/><rect x="858.25" y="270.9" width="4.0" height="13.10" fill="#fff" stroke="#000" stroke-width="1.1"/><rect x="866.74" y="243.9" width="4.0" height="25.00" fill="#fff" stroke="#000" stroke-width="1.1"/><path d="M874.62,243.8 H879.83" stroke="#000" stroke-width="1.3"/><rect x="883.16" y="245.3" width="5.1" height="3.30" fill="#000"/><rect x="891.65" y="248.4" width="5.1" height="9.10" fill="#000"/><rect x="900.69" y="241.7" width="4.0" height="15.60" fill="#fff" stroke="#000" stroke-width="1.1"/><rect x="908.63" y="240.9" width="5.1" height="2.00" fill="#000"/><rect x="917.11" y="244" width="5.1" height="3.90" fill="#000"/><rect x="926.15" y="239.1" width="4.0" height="7.80" fill="#fff" stroke="#000" stroke-width="1.1"/><path d="M934.04,238.6 H939.24" stroke="#000" stroke-width="1.3"/><rect x="943.13" y="235.0" width="4.0" height="7.10" fill="#fff" stroke="#000" stroke-width="1.1"/><rect x="951.61" y="228.7" width="4.0" height="5.50" fill="#fff" stroke="#000" stroke-width="1.1"/><rect x="959.55" y="228.2" width="5.1" height="4.60" fill="#000"/><path d="M967.99,234.2 H973.19" stroke="#000" stroke-width="1.3"/><rect x="976.53" y="234.9" width="5.1" height="2.00" fill="#000"/><rect x="985.01" y="238" width="5.1" height="6.50" fill="#000"/><rect x="993.50" y="245.3" width="5.1" height="9.30" fill="#000"/><rect x="1001.99" y="255.1" width="5.1" height="4.30" fill="#000"/><rect x="1010.48" y="259.9" width="5.1" height="4.80" fill="#000"/><rect x="1018.96" y="265.2" width="5.1" height="16.50" fill="#000"/><rect x="1028.00" y="261.7" width="4.0" height="19.20" fill="#fff" stroke="#000" stroke-width="1.1"/><rect x="1035.94" y="261.2" width="5.1" height="26.50" fill="#000"/><path d="M1044.38,287.1 H1049.58" stroke="#000" stroke-width="1.3"/><rect x="1052.91" y="286.3" width="5.1" height="45.00" fill="#000"/><rect x="1061.95" y="329.3" width="4.0" height="1.50" fill="#fff" stroke="#000" stroke-width="1.1"/><rect x="1069.89" y="328.8" width="5.1" height="3.20" fill="#000"/><rect x="1078.38" y="332.3" width="5.1" height="7.60" fill="#000"/><rect x="1087.41" y="320.7" width="4.0" height="18.30" fill="#fff" stroke="#000" stroke-width="1.1"/><rect x="1095.35" y="320.2" width="5.1" height="13.30" fill="#000"/><rect x="1103.84" y="334.2" width="5.1" height="15.10" fill="#000"/><path d="M1112.28,349 H1117.47" stroke="#000" stroke-width="1.3"/><path d="M1120.76,348.1 H1125.96" stroke="#000" stroke-width="1.3"/><rect x="1129.85" y="340.9" width="4.0" height="5.70" fill="#fff" stroke="#000" stroke-width="1.1"/><path d="M1137.74,341.4 H1142.94" stroke="#000" stroke-width="1.3"/><path d="M1146.23,340.9 H1151.42" stroke="#000" stroke-width="1.3"/><rect x="1154.76" y="340.5" width="5.1" height="8.80" fill="#000"/><rect x="1163.25" y="348.6" width="5.1" height="1.60" fill="#000"/><path d="M1171.69,350.4 H1176.89" stroke="#000" stroke-width="1.3"/><rect x="1180.23" y="350.4" width="5.1" height="7.20" fill="#000"/><rect x="1189.26" y="350.5" width="4.0" height="6.20" fill="#fff" stroke="#000" stroke-width="1.1"/><rect x="1197.20" y="350" width="5.1" height="4.70" fill="#000"/><rect x="1206.24" y="334.7" width="4.0" height="19.50" fill="#fff" stroke="#000" stroke-width="1.1"/><rect x="1214.73" y="329.3" width="4.0" height="4.80" fill="#fff" stroke="#000" stroke-width="1.1"/><rect x="1223.21" y="318.8" width="4.0" height="9.50" fill="#fff" stroke="#000" stroke-width="1.1"/><rect x="1231.15" y="316.9" width="5.1" height="6.80" fill="#000"/><rect x="1239.64" y="324.1" width="5.1" height="6.20" fill="#000"/><path d="M1248.08,329.4 H1253.28" stroke="#000" stroke-width="1.3"/><rect x="1257.16" y="300.6" width="4.0" height="28.00" fill="#fff" stroke="#000" stroke-width="1.1"/><rect x="1265.65" y="293.4" width="4.0" height="5.30" fill="#fff" stroke="#000" stroke-width="1.1"/><rect x="1273.59" y="292.7" width="5.1" height="12.00" fill="#000"/><rect x="1282.08" y="304.2" width="5.1" height="20.70" fill="#000"/><rect x="1291.11" y="254.4" width="4.0" height="71.40" fill="#fff" stroke="#000" stroke-width="1.1"/><rect x="1299.05" y="252.9" width="5.1" height="27.80" fill="#000"/><rect x="1307.54" y="281" width="5.1" height="23.70" fill="#000"/><rect x="1316.03" y="305.7" width="5.1" height="20.20" fill="#000"/><path d="M1324.46,325.6 H1329.66" stroke="#000" stroke-width="1.3"/><path d="M1332.95,327 H1338.15" stroke="#000" stroke-width="1.3"/><rect x="1342.04" y="324.6" width="4.0" height="1.90" fill="#fff" stroke="#000" stroke-width="1.1"/><path d="M1349.93,327 H1355.12" stroke="#000" stroke-width="1.3"/><rect x="1358.46" y="327" width="5.1" height="2.20" fill="#000"/><rect x="1366.95" y="329.2" width="5.1" height="5.30" fill="#000"/><rect x="1375.44" y="334.2" width="5.1" height="8.60" fill="#000"/><path d="M1383.88,344 H1389.07" stroke="#000" stroke-width="1.3"/><rect x="1392.96" y="336.8" width="4.0" height="6.10" fill="#fff" stroke="#000" stroke-width="1.1"/><rect x="1400.90" y="336.2" width="5.1" height="10.00" fill="#000"/><rect x="1409.94" y="343.1" width="4.0" height="2.60" fill="#fff" stroke="#000" stroke-width="1.1"/><rect x="1418.43" y="337.7" width="4.0" height="4.40" fill="#fff" stroke="#000" stroke-width="1.1"/><rect x="1426.36" y="337.4" width="5.1" height="12.00" fill="#000"/><rect x="1435.40" y="321.8" width="4.0" height="26.30" fill="#fff" stroke="#000" stroke-width="1.1"/><rect x="1443.34" y="322.2" width="5.1" height="38.70" fill="#000"/><rect x="1451.83" y="360.6" width="5.1" height="18.30" fill="#000"/><rect x="1460.86" y="369.4" width="4.0" height="9.80" fill="#fff" stroke="#000" stroke-width="1.1"/><rect x="1469.35" y="361.1" width="4.0" height="6.70" fill="#fff" stroke="#000" stroke-width="1.1"/></g><path d="M284.6,368.9 H1533" stroke="#0a8a0a" stroke-width="2.2" stroke-dasharray="9.4,6.5,3.2,6.33"/><path d="M283.8,488.5 V157.6 H1533.4 V488.5" fill="none" stroke="#111" stroke-width="1.15"/><path d="M284,488.6 H1533.5" stroke="#777" stroke-width="1.6"/><path d="M1531.5,183.5 H1537" stroke="#111" stroke-width="1"/><path d="M1531.5,217.5 H1537" stroke="#111" stroke-width="1"/><path d="M1531.5,251.5 H1537" stroke="#111" stroke-width="1"/><path d="M1531.5,285.5 H1537" stroke="#111" stroke-width="1"/><path d="M1531.5,319.5 H1537" stroke="#111" stroke-width="1"/><path d="M1531.5,353.5 H1537" stroke="#111" stroke-width="1"/><path d="M1531.5,387.5 H1537" stroke="#111" stroke-width="1"/><path d="M1531.5,421.5 H1537" stroke="#111" stroke-width="1"/><path d="M1531.5,455.5 H1537" stroke="#111" stroke-width="1"/><path d="M283.70,488 V493.5" stroke="#111" stroke-width="1.6"/><path d="M351.60,488 V493.5" stroke="#111" stroke-width="1.6"/><path d="M419.50,488 V493.5" stroke="#111" stroke-width="1.6"/><path d="M487.40,488 V493.5" stroke="#111" stroke-width="1.6"/><path d="M555.30,488 V493.5" stroke="#111" stroke-width="1.6"/><path d="M623.20,488 V493.5" stroke="#111" stroke-width="1.6"/><path d="M691.10,488 V493.5" stroke="#111" stroke-width="1.6"/><path d="M759.00,488 V493.5" stroke="#111" stroke-width="1.6"/><path d="M826.90,488 V493.5" stroke="#111" stroke-width="1.6"/><path d="M894.80,488 V493.5" stroke="#111" stroke-width="1.6"/><path d="M962.70,488 V493.5" stroke="#111" stroke-width="1.6"/><path d="M1030.60,488 V493.5" stroke="#111" stroke-width="1.6"/><path d="M1098.50,488 V493.5" stroke="#111" stroke-width="1.6"/><path d="M1166.40,488 V493.5" stroke="#111" stroke-width="1.6"/><path d="M1234.30,488 V493.5" stroke="#111" stroke-width="1.6"/><path d="M1302.20,488 V493.5" stroke="#111" stroke-width="1.6"/><path d="M1370.10,488 V493.5" stroke="#111" stroke-width="1.6"/><path d="M1438.00,488 V493.5" stroke="#111" stroke-width="1.6"/><rect x="1536.9" y="354.3" width="39.6" height="13.1" fill="#000"/><defs>
<linearGradient id="gb1" x1="0" y1="0" x2="0" y2="1"><stop offset="0" stop-color="#5757ff"/><stop offset="1" stop-color="#2424e6"/></linearGradient>
<linearGradient id="gb2" x1="0" y1="0" x2="0" y2="1"><stop offset="0" stop-color="#2a2aee"/><stop offset="1" stop-color="#0000b4"/></linearGradient>
<linearGradient id="gbt" x1="0" y1="0" x2="0" y2="1"><stop offset="0" stop-color="#f6f6f6"/><stop offset="1" stop-color="#d6d6d6"/></linearGradient>
</defs><rect x="339" y="178.2" width="102.6" height="27" fill="#fff"/><rect x="288.6" y="178.2" width="49.8" height="27.3" fill="url(#gb1)"/><rect x="441.6" y="178.2" width="50.2" height="27.3" fill="url(#gb1)"/><rect x="288.6" y="205" width="100.4" height="33" fill="url(#gb2)"/><rect x="392" y="205" width="99.8" height="33" fill="url(#gb2)"/><path d="M294.4,204.3 H334 M447,204.3 H486.5" stroke="#9a9aff" stroke-width="1"/><rect x="341.6" y="178.6" width="97" height="23.8" fill="#fff" stroke="#a8a8a8" stroke-width="1"/><rect x="342.1" y="179.1" width="24.2" height="22.8" fill="url(#gbt)" stroke="#b4b4b4" stroke-width="0.8"/><rect x="414" y="179.1" width="24.1" height="22.8" fill="url(#gbt)" stroke="#b4b4b4" stroke-width="0.8"/><path d="M351.1,188.7 H356.9 L354,191.5 Z M423.1,191.5 H428.9 L426,188.7 Z" fill="#111"/><rect x="288.2" y="160.9" width="15.2" height="12.2" rx="1" fill="#eaf2fb" stroke="#4a90e2" stroke-width="1"/>
<rect x="288.2" y="160.9" width="15.2" height="2" fill="#4a90e2"/>
<rect x="297.5" y="164" width="5" height="4.5" fill="#f3a58a"/><rect x="297.5" y="168.8" width="5" height="3.5" fill="#bcd6f2"/>
<path d="M289.5,166.5 L291.5,165 L293,167.5 L295,164.5 L296.5,166.5" stroke="#e24a3a" stroke-width="0.9" fill="none"/>
<path d="M289.5,170.5 L291.5,169 L293,171.5 L295,168.5 L296.5,170.5" stroke="#3a6fd0" stroke-width="0.9" fill="none"/>
<path d="M308,161.2 H311.3 V166.9 H314.8 V172.2 H308 Z" fill="#1a5ee8" stroke="#0010e0" stroke-width="0.6"/>
<path d="M320.7,161.2 H323.9 V172.2 H316.9 V166.9 H320.7 Z" fill="#e03030" stroke="#c00000" stroke-width="0.6"/>
<rect x="313.6" y="161.6" width="4.9" height="3" fill="#fff" stroke="#808080" stroke-width="1"/></svg>
<span class="t" style="left:1537.70px;top:177.00px;font-size:9.5px;color:#111;transform:scaleX(0.9697);">0.99038</span>
<span class="t" style="left:1537.70px;top:211.00px;font-size:9.5px;color:#111;transform:scaleX(0.9697);">0.98757</span>
<span class="t" style="left:1537.70px;top:245.00px;font-size:9.5px;color:#111;transform:scaleX(0.9697);">0.98476</span>
<span class="t" style="left:1537.70px;top:279.00px;font-size:9.5px;color:#111;transform:scaleX(0.9697);">0.98195</span>
<span class="t" style="left:1537.70px;top:313.00px;font-size:9.5px;color:#111;transform:scaleX(0.9697);">0.97913</span>
<span class="t" style="left:1537.70px;top:347.00px;font-size:9.5px;color:#111;transform:scaleX(0.9697);">0.97632</span>
<span class="t" style="left:1537.70px;top:381.00px;font-size:9.5px;color:#111;transform:scaleX(0.9697);">0.97351</span>
<span class="t" style="left:1537.70px;top:415.00px;font-size:9.5px;color:#111;transform:scaleX(0.9697);">0.97070</span>
<span class="t" style="left:1537.70px;top:449.00px;font-size:9.5px;color:#111;transform:scaleX(0.9697);">0.96789</span>
<span class="t" style="left:1539.40px;top:356.00px;font-size:9.5px;color:#fff;font-weight:bold;transform:scaleX(1.0075);">0.97563</span>
<span class="t" style="left:284.50px;top:495.00px;font-size:9.5px;color:#111;">13 Oct 18:00</span>
<span class="t" style="left:352.40px;top:495.00px;font-size:9.5px;color:#111;">14 Oct 02:00</span>
<span class="t" style="left:420.30px;top:495.00px;font-size:9.5px;color:#111;">14 Oct 10:00</span>
<span class="t" style="left:488.20px;top:495.00px;font-size:9.5px;color:#111;">14 Oct 18:00</span>
<span class="t" style="left:556.10px;top:495.00px;font-size:9.5px;color:#111;">17 Oct 02:00</span>
<span class="t" style="left:624.00px;top:495.00px;font-size:9.5px;color:#111;">17 Oct 10:00</span>
<span class="t" style="left:691.90px;top:495.00px;font-size:9.5px;color:#111;">17 Oct 18:00</span>
<span class="t" style="left:759.80px;top:495.00px;font-size:9.5px;color:#111;">18 Oct 02:00</span>
<span class="t" style="left:827.70px;top:495.00px;font-size:9.5px;color:#111;">18 Oct 10:00</span>
<span class="t" style="left:895.60px;top:495.00px;font-size:9.5px;color:#111;">18 Oct 18:00</span>
<span class="t" style="left:963.50px;top:495.00px;font-size:9.5px;color:#111;">19 Oct 02:00</span>
<span class="t" style="left:1031.40px;top:495.00px;font-size:9.5px;color:#111;">19 Oct 10:00</span>
<span class="t" style="left:1099.30px;top:495.00px;font-size:9.5px;color:#111;">19 Oct 18:00</span>
<span class="t" style="left:1167.20px;top:495.00px;font-size:9.5px;color:#111;">20 Oct 02:00</span>
<span class="t" style="left:1235.10px;top:495.00px;font-size:9.5px;color:#111;">20 Oct 10:00</span>
<span class="t" style="left:1303.00px;top:495.00px;font-size:9.5px;color:#111;">20 Oct 18:00</span>
<span class="t" style="left:1370.90px;top:495.00px;font-size:9.5px;color:#111;">21 Oct 02:00</span>
<span class="t" style="left:1438.80px;top:495.00px;font-size:9.5px;color:#111;">21 Oct 10:00</span>
<span class="t" style="left:326.80px;top:162.00px;font-size:10px;color:#111;transform:scaleX(0.9431);">EURUSD,H1</span>
<span class="t" style="left:388.75px;top:162.00px;font-size:10px;color:#111;transform:scaleX(1.0547);">0.97501 0.97593 0.97452 0.97563</span>
<span class="t" style="left:300.60px;top:185.00px;font-size:12.6px;color:#fff;transform:scaleX(0.8921);-webkit-text-stroke:0.45px #fff;">SELL</span>
<span class="t" style="left:455.60px;top:185.00px;font-size:12.6px;color:#fff;transform:scaleX(0.8916);-webkit-text-stroke:0.45px #fff;">BUY</span>
<span class="t" style="left:385.70px;top:186.00px;font-size:11.4px;color:#111;transform:scaleX(0.9645);">0.01</span>
<span class="t" style="left:304.70px;top:217.00px;font-size:12px;color:#fff;transform:scaleX(0.9419);-webkit-text-stroke:0.5px #fff;">0.97</span>
<span class="t" style="left:331.80px;top:208.00px;font-size:24.5px;color:#fff;transform:scaleX(0.9724);-webkit-text-stroke:0.7px #fff;">56</span>
<span class="t" style="left:363.80px;top:210.00px;font-size:11.4px;color:#fff;transform:scaleX(0.8675);">3</span>
<span class="t" style="left:407.20px;top:217.00px;font-size:12px;color:#fff;transform:scaleX(0.9719);-webkit-text-stroke:0.5px #fff;">0.97</span>
<span class="t" style="left:434.70px;top:208.00px;font-size:24.5px;color:#fff;transform:scaleX(0.9834);-webkit-text-stroke:0.7px #fff;">56</span>
<span class="t" style="left:466.30px;top:210.00px;font-size:11.4px;color:#fff;transform:scaleX(0.9779);">3</span>
<span class="t" style="left:290.70px;top:355.00px;font-size:11px;color:#111;transform:scaleX(0.9569);font-weight:bold;">#1493330568 buy 0.01</span>
<span class="t" style="left:291.30px;top:355.00px;font-size:11px;color:#111;transform:scaleX(0.9621);">#1493330557 sell 0.01</span>
<div style="position:absolute;left:12px;top:539px;width:1572px;height:223px;background:#f0f0f0;border:1px solid #a0a0a0;border-bottom:none;"></div>
<div style="position:absolute;left:13.5px;top:540.5px;width:1551px;height:218px;background:#fff;"></div>
<div style="position:absolute;left:1568px;top:540.5px;width:1px;height:218px;background:#d8d8d8;"></div>
<div style="position:absolute;left:12px;top:762px;width:1573px;height:1.2px;background:#111;"></div>
<div style="position:absolute;left:13.5px;top:540.5px;width:1551px;height:24px;background:#f8f8f8;"></div>
<div style="position:absolute;left:13.5px;top:564.5px;width:1551px;height:24.4px;background:#f7f7f7;"></div>
<div style="position:absolute;left:13.5px;top:564.0px;width:1551px;height:1px;background:#e6e6e6;"></div>
<div style="position:absolute;left:13.5px;top:588.4px;width:1551px;height:1px;background:#e6e6e6;"></div>
<div style="position:absolute;left:13.5px;top:613.3px;width:1551px;height:24.4px;background:#f7f7f7;"></div>
<div style="position:absolute;left:13.5px;top:612.8px;width:1551px;height:1px;background:#e6e6e6;"></div>
<div style="position:absolute;left:13.5px;top:637.2px;width:1551px;height:1px;background:#e6e6e6;"></div>
<div style="position:absolute;left:13.5px;top:662.1px;width:1551px;height:24.4px;background:#f7f7f7;"></div>
<div style="position:absolute;left:13.5px;top:661.6px;width:1551px;height:1px;background:#e6e6e6;"></div>
<div style="position:absolute;left:13.5px;top:686.0px;width:1551px;height:1px;background:#e6e6e6;"></div>
<div style="position:absolute;left:13.5px;top:710.9px;width:1551px;height:24.4px;background:#f7f7f7;"></div>
<div style="position:absolute;left:13.5px;top:710.4px;width:1551px;height:1px;background:#e6e6e6;"></div>
<div style="position:absolute;left:13.5px;top:734.8px;width:1551px;height:1px;background:#e6e6e6;"></div>
<div style="position:absolute;left:141.0px;top:540.5px;width:1px;height:194.79999999999998px;background:#e6e6e6;"></div>
<div style="position:absolute;left:270.0px;top:540.5px;width:1px;height:194.79999999999998px;background:#e6e6e6;"></div>
<div style="position:absolute;left:399.5px;top:540.5px;width:1px;height:194.79999999999998px;background:#e6e6e6;"></div>
<div style="position:absolute;left:529.0px;top:540.5px;width:1px;height:194.79999999999998px;background:#e6e6e6;"></div>
<div style="position:absolute;left:658.5px;top:540.5px;width:1px;height:194.79999999999998px;background:#e6e6e6;"></div>
<div style="position:absolute;left:788.0px;top:540.5px;width:1px;height:194.79999999999998px;background:#e6e6e6;"></div>
<div style="position:absolute;left:917.0px;top:540.5px;width:1px;height:194.79999999999998px;background:#e6e6e6;"></div>
<div style="position:absolute;left:1046.5px;top:540.5px;width:1px;height:194.79999999999998px;background:#e6e6e6;"></div>
<div style="position:absolute;left:1175.5px;top:540.5px;width:1px;height:194.79999999999998px;background:#e6e6e6;"></div>
<div style="position:absolute;left:1305.0px;top:540.5px;width:1px;height:194.79999999999998px;background:#e6e6e6;"></div>
<div style="position:absolute;left:1434.5px;top:540.5px;width:1px;height:194.79999999999998px;background:#e6e6e6;"></div>
<div style="position:absolute;left:1564.5px;top:540.5px;width:1px;height:194.79999999999998px;background:#e6e6e6;"></div>
<span class="t" style="left:19.00px;top:548.00px;font-size:11.5px;color:#111;transform:scaleX(0.9680);">Symbol</span>
<span class="t" style="left:148.00px;top:548.00px;font-size:11.5px;color:#111;transform:scaleX(0.9784);">Ticket</span>
<span class="t" style="left:353.97px;top:548.00px;font-size:11.5px;color:#111;transform:scaleX(0.9761);">Time</span>
<span class="t" style="left:497.76px;top:548.00px;font-size:11.5px;color:#111;transform:scaleX(0.9842);">Type</span>
<span class="t" style="left:614.04px;top:548.00px;font-size:11.5px;color:#111;transform:scaleX(0.9844);">Volume</span>
<span class="t" style="left:756.20px;top:548.00px;font-size:11.5px;color:#111;transform:scaleX(0.9578);">Price</span>
<span class="t" style="left:885.17px;top:548.00px;font-size:11.5px;color:#111;transform:scaleX(1.0624);">S / L</span>
<span class="t" style="left:1014.12px;top:548.00px;font-size:11.5px;color:#111;transform:scaleX(1.0668);">T / P</span>
<span class="t" style="left:1143.70px;top:548.00px;font-size:11.5px;color:#111;transform:scaleX(0.9578);">Price</span>
<span class="t" style="left:1270.66px;top:548.00px;font-size:11.5px;color:#111;transform:scaleX(0.9607);">Swap</span>
<span class="t" style="left:1402.07px;top:548.00px;font-size:11.5px;color:#111;transform:scaleX(0.9586);">Profit</span>
<span class="t" style="left:1509.36px;top:548.00px;font-size:11.5px;color:#111;transform:scaleX(0.9717);">Comment</span>
<span class="t" style="left:36.00px;top:572.00px;font-size:11.5px;color:#111;transform:scaleX(0.9900);">eurusd</span>
<span class="t" style="left:148.90px;top:572.00px;font-size:11.5px;color:#111;transform:scaleX(0.9900);">1493330457</span>
<span class="t" style="left:285.77px;top:572.00px;font-size:11.5px;color:#111;transform:scaleX(1.0182);">2022.10.21 14:10:56</span>
<span class="t" style="left:505.62px;top:572.00px;font-size:11.5px;color:#111;transform:scaleX(0.9900);">sell</span>
<span class="t" style="left:629.34px;top:572.00px;font-size:11.5px;color:#111;transform:scaleX(0.9900);">0.01</span>
<span class="t" style="left:739.95px;top:572.00px;font-size:11.5px;color:#111;transform:scaleX(0.9900);">0.97506</span>
<span class="t" style="left:869.05px;top:572.00px;font-size:11.5px;color:#111;transform:scaleX(0.9900);">0.00000</span>
<span class="t" style="left:998.55px;top:572.00px;font-size:11.5px;color:#111;transform:scaleX(0.9900);">0.00000</span>
<span class="t" style="left:1127.75px;top:572.00px;font-size:11.5px;color:#111;transform:scaleX(0.9900);">0.97563</span>
<span class="t" style="left:1276.44px;top:572.00px;font-size:11.5px;color:#111;transform:scaleX(0.9900);">0.00</span>
<span class="t" style="left:1376.35px;top:572.00px;font-size:11.5px;color:#111;transform:scaleX(0.9900);">-0.57</span>
<span class="t" style="left:36.00px;top:596.00px;font-size:11.5px;color:#111;transform:scaleX(0.9900);">eurusd</span>
<span class="t" style="left:148.90px;top:596.00px;font-size:11.5px;color:#111;transform:scaleX(0.9900);">1493330494</span>
<span class="t" style="left:285.77px;top:596.00px;font-size:11.5px;color:#111;transform:scaleX(1.0182);">2022.10.21 14:10:57</span>
<span class="t" style="left:504.34px;top:596.00px;font-size:11.5px;color:#111;transform:scaleX(0.9900);">buy</span>
<span class="t" style="left:629.34px;top:596.00px;font-size:11.5px;color:#111;transform:scaleX(0.9900);">0.01</span>
<span class="t" style="left:739.95px;top:596.00px;font-size:11.5px;color:#111;transform:scaleX(0.9900);">0.97505</span>
<span class="t" style="left:869.05px;top:596.00px;font-size:11.5px;color:#111;transform:scaleX(0.9900);">0.00000</span>
<span class="t" style="left:998.55px;top:596.00px;font-size:11.5px;color:#111;transform:scaleX(0.9900);">0.00000</span>
<span class="t" style="left:1127.75px;top:596.00px;font-size:11.5px;color:#111;transform:scaleX(0.9900);">0.97563</span>
<span class="t" style="left:1276.44px;top:596.00px;font-size:11.5px;color:#111;transform:scaleX(0.9900);">0.00</span>
<span class="t" style="left:1380.14px;top:596.00px;font-size:11.5px;color:#111;transform:scaleX(0.9900);">0.58</span>
<span class="t" style="left:36.00px;top:621.00px;font-size:11.5px;color:#111;transform:scaleX(0.9900);">eurusd</span>
<span class="t" style="left:148.90px;top:621.00px;font-size:11.5px;color:#111;transform:scaleX(0.9900);">1493330516</span>
<span class="t" style="left:285.77px;top:621.00px;font-size:11.5px;color:#111;transform:scaleX(1.0182);">2022.10.21 14:10:57</span>
<span class="t" style="left:505.62px;top:621.00px;font-size:11.5px;color:#111;transform:scaleX(0.9900);">sell</span>
<span class="t" style="left:629.34px;top:621.00px;font-size:11.5px;color:#111;transform:scaleX(0.9900);">0.01</span>
<span class="t" style="left:739.95px;top:621.00px;font-size:11.5px;color:#111;transform:scaleX(0.9900);">0.97505</span>
<span class="t" style="left:869.05px;top:621.00px;font-size:11.5px;color:#111;transform:scaleX(0.9900);">0.00000</span>
<span class="t" style="left:998.55px;top:621.00px;font-size:11.5px;color:#111;transform:scaleX(0.9900);">0.00000</span>
<span class="t" style="left:1127.75px;top:621.00px;font-size:11.5px;color:#111;transform:scaleX(0.9900);">0.97563</span>
<span class="t" style="left:1276.44px;top:621.00px;font-size:11.5px;color:#111;transform:scaleX(0.9900);">0.00</span>
<span class="t" style="left:1376.35px;top:621.00px;font-size:11.5px;color:#111;transform:scaleX(0.9900);">-0.58</span>
<span class="t" style="left:36.00px;top:645.00px;font-size:11.5px;color:#111;transform:scaleX(0.9900);">eurusd</span>
<span class="t" style="left:148.90px;top:645.00px;font-size:11.5px;color:#111;transform:scaleX(0.9900);">1493330542</span>
<span class="t" style="left:285.77px;top:645.00px;font-size:11.5px;color:#111;transform:scaleX(1.0182);">2022.10.21 14:10:58</span>
<span class="t" style="left:504.34px;top:645.00px;font-size:11.5px;color:#111;transform:scaleX(0.9900);">buy</span>
<span class="t" style="left:629.34px;top:645.00px;font-size:11.5px;color:#111;transform:scaleX(0.9900);">0.01</span>
<span class="t" style="left:739.95px;top:645.00px;font-size:11.5px;color:#111;transform:scaleX(0.9900);">0.97504</span>
<span class="t" style="left:869.05px;top:645.00px;font-size:11.5px;color:#111;transform:scaleX(0.9900);">0.00000</span>
<span class="t" style="left:998.55px;top:645.00px;font-size:11.5px;color:#111;transform:scaleX(0.9900);">0.00000</span>
<span class="t" style="left:1127.75px;top:645.00px;font-size:11.5px;color:#111;transform:scaleX(0.9900);">0.97563</span>
<span class="t" style="left:1276.44px;top:645.00px;font-size:11.5px;color:#111;transform:scaleX(0.9900);">0.00</span>
<span class="t" style="left:1380.14px;top:645.00px;font-size:11.5px;color:#111;transform:scaleX(0.9900);">0.59</span>
<span class="t" style="left:36.00px;top:669.00px;font-size:11.5px;color:#111;transform:scaleX(0.9900);">eurusd</span>
<span class="t" style="left:148.90px;top:669.00px;font-size:11.5px;color:#111;transform:scaleX(0.9900);">1493330557</span>
<span class="t" style="left:285.77px;top:669.00px;font-size:11.5px;color:#111;transform:scaleX(1.0182);">2022.10.21 14:10:58</span>
<span class="t" style="left:505.62px;top:669.00px;font-size:11.5px;color:#111;transform:scaleX(0.9900);">sell</span>
<span class="t" style="left:629.34px;top:669.00px;font-size:11.5px;color:#111;transform:scaleX(0.9900);">0.01</span>
<span class="t" style="left:739.95px;top:669.00px;font-size:11.5px;color:#111;transform:scaleX(0.9900);">0.97505</span>
<span class="t" style="left:869.05px;top:669.00px;font-size:11.5px;color:#111;transform:scaleX(0.9900);">0.00000</span>
<span class="t" style="left:998.55px;top:669.00px;font-size:11.5px;color:#111;transform:scaleX(0.9900);">0.00000</span>
<span class="t" style="left:1127.75px;top:669.00px;font-size:11.5px;color:#111;transform:scaleX(0.9900);">0.97563</span>
<span class="t" style="left:1276.44px;top:669.00px;font-size:11.5px;color:#111;transform:scaleX(0.9900);">0.00</span>
<span class="t" style="left:1376.35px;top:669.00px;font-size:11.5px;color:#111;transform:scaleX(0.9900);">-0.58</span>
<span class="t" style="left:36.00px;top:694.00px;font-size:11.5px;color:#111;transform:scaleX(0.9900);">eurusd</span>
<span class="t" style="left:148.90px;top:694.00px;font-size:11.5px;color:#111;transform:scaleX(0.9900);">1493330568</span>
<span class="t" style="left:285.77px;top:694.00px;font-size:11.5px;color:#111;transform:scaleX(1.0182);">2022.10.21 14:10:58</span>
<span class="t" style="left:504.34px;top:694.00px;font-size:11.5px;color:#111;transform:scaleX(0.9900);">buy</span>
<span class="t" style="left:629.34px;top:694.00px;font-size:11.5px;color:#111;transform:scaleX(0.9900);">0.01</span>
<span class="t" style="left:739.95px;top:694.00px;font-size:11.5px;color:#111;transform:scaleX(0.9900);">0.97505</span>
<span class="t" style="left:869.05px;top:694.00px;font-size:11.5px;color:#111;transform:scaleX(0.9900);">0.00000</span>
<span class="t" style="left:998.55px;top:694.00px;font-size:11.5px;color:#111;transform:scaleX(0.9900);">0.00000</span>
<span class="t" style="left:1127.75px;top:694.00px;font-size:11.5px;color:#111;transform:scaleX(0.9900);">0.97563</span>
<span class="t" style="left:1276.44px;top:694.00px;font-size:11.5px;color:#111;transform:scaleX(0.9900);">0.00</span>
<span class="t" style="left:1380.14px;top:694.00px;font-size:11.5px;color:#111;transform:scaleX(0.9900);">0.58</span>
<span class="t" style="left:36.00px;top:718.00px;font-size:11.5px;color:#111;transform:scaleX(0.9900);">eurusd</span>
<span class="t" style="left:148.90px;top:718.00px;font-size:11.5px;color:#111;transform:scaleX(0.9900);">1493330669</span>
<span class="t" style="left:285.77px;top:718.00px;font-size:11.5px;color:#111;transform:scaleX(1.0265);">2022.10.21 14:11:01</span>
<span class="t" style="left:504.34px;top:718.00px;font-size:11.5px;color:#111;transform:scaleX(0.9900);">buy</span>
<span class="t" style="left:629.34px;top:718.00px;font-size:11.5px;color:#111;transform:scaleX(0.9900);">0.01</span>
<span class="t" style="left:739.95px;top:718.00px;font-size:11.5px;color:#111;transform:scaleX(0.9900);">0.97500</span>
<span class="t" style="left:869.05px;top:718.00px;font-size:11.5px;color:#111;transform:scaleX(0.9900);">0.00000</span>
<span class="t" style="left:998.55px;top:718.00px;font-size:11.5px;color:#111;transform:scaleX(0.9900);">0.00000</span>
<span class="t" style="left:1127.75px;top:718.00px;font-size:11.5px;color:#111;transform:scaleX(0.9900);">0.97563</span>
<span class="t" style="left:1276.44px;top:718.00px;font-size:11.5px;color:#111;transform:scaleX(0.9900);">0.00</span>
<span class="t" style="left:1380.14px;top:718.00px;font-size:11.5px;color:#111;transform:scaleX(0.9900);">0.63</span>
<div style="position:absolute;left:13.5px;top:735.3px;width:1551px;height:23.4px;background:#c9c9c9;"></div>
<div style="position:absolute;left:1305px;top:735.3px;width:1px;height:23.4px;background:#e0e0e0;"></div>
<div style="position:absolute;left:1434.5px;top:735.3px;width:1px;height:23.4px;background:#e0e0e0;"></div>
<svg style="position:absolute;left:12px;top:540px" width="1430" height="225" viewBox="12 540 1430 225"><path d="M385,555.6 L392.5,555.6 L388.75,551.6 Z" fill="#444"/><defs><linearGradient id="ig0" x1="0" y1="0" x2="0" y2="1"><stop offset="0" stop-color="#fff0ea"/><stop offset="1" stop-color="#fcc6b2"/></linearGradient></defs><path d="M20.8,568.80 H30.4 Q31.5,568.80 31.5,569.90 V579.90 L27.5,584.10 H20.8 Q19.7,584.10 19.7,583.00 V569.90 Q19.7,568.80 20.8,568.80 Z" fill="url(#ig0)" stroke="#ee5a2a" stroke-width="1.15"/><path d="M22.3,572.50 H29 M22.3,575.50 H29" stroke="#f29a80" stroke-width="1.1"/><path d="M27.5,584.10 V581.10 Q27.5,580.10 28.5,580.10 H31.5 Z" fill="#e02808" stroke="#ee5a2a" stroke-width="0.6"/><path d="M1414.8,573.80 L1421.4,580.40 M1421.4,573.80 L1414.8,580.40" stroke="#a2a2a2" stroke-width="2.1"/><defs><linearGradient id="ig1" x1="0" y1="0" x2="0" y2="1"><stop offset="0" stop-color="#eaf4fd"/><stop offset="1" stop-color="#a9d2f5"/></linearGradient></defs><path d="M20.8,593.20 H30.4 Q31.5,593.20 31.5,594.30 V604.30 L27.5,608.50 H20.8 Q19.7,608.50 19.7,607.40 V594.30 Q19.7,593.20 20.8,593.20 Z" fill="url(#ig1)" stroke="#2f8fd0" stroke-width="1.15"/><path d="M22.3,596.90 H29 M22.3,599.90 H29" stroke="#5aa8dc" stroke-width="1.1"/><path d="M27.5,608.50 V605.50 Q27.5,604.50 28.5,604.50 H31.5 Z" fill="#1f6fb8" stroke="#2f8fd0" stroke-width="0.6"/><path d="M1414.8,598.20 L1421.4,604.80 M1421.4,598.20 L1414.8,604.80" stroke="#a2a2a2" stroke-width="2.1"/><defs><linearGradient id="ig2" x1="0" y1="0" x2="0" y2="1"><stop offset="0" stop-color="#fff0ea"/><stop offset="1" stop-color="#fcc6b2"/></linearGradient></defs><path d="M20.8,617.60 H30.4 Q31.5,617.60 31.5,618.70 V628.70 L27.5,632.90 H20.8 Q19.7,632.90 19.7,631.80 V618.70 Q19.7,617.60 20.8,617.60 Z" fill="url(#ig2)" stroke="#ee5a2a" stroke-width="1.15"/><path d="M22.3,621.30 H29 M22.3,624.30 H29" stroke="#f29a80" stroke-width="1.1"/><path d="M27.5,632.90 V629.90 Q27.5,628.90 28.5,628.90 H31.5 Z" fill="#e02808" stroke="#ee5a2a" stroke-width="0.6"/><path d="M1414.8,622.60 L1421.4,629.20 M1421.4,622.60 L1414.8,629.20" stroke="#a2a2a2" stroke-width="2.1"/><defs><linearGradient id="ig3" x1="0" y1="0" x2="0" y2="1"><stop offset="0" stop-color="#eaf4fd"/><stop offset="1" stop-color="#a9d2f5"/></linearGradient></defs><path d="M20.8,642.00 H30.4 Q31.5,642.00 31.5,643.10 V653.10 L27.5,657.30 H20.8 Q19.7,657.30 19.7,656.20 V643.10 Q19.7,642.00 20.8,642.00 Z" fill="url(#ig3)" stroke="#2f8fd0" stroke-width="1.15"/><path d="M22.3,645.70 H29 M22.3,648.70 H29" stroke="#5aa8dc" stroke-width="1.1"/><path d="M27.5,657.30 V654.30 Q27.5,653.30 28.5,653.30 H31.5 Z" fill="#1f6fb8" stroke="#2f8fd0" stroke-width="0.6"/><path d="M1414.8,647.00 L1421.4,653.60 M1421.4,647.00 L1414.8,653.60" stroke="#a2a2a2" stroke-width="2.1"/><defs><linearGradient id="ig4" x1="0" y1="0" x2="0" y2="1"><stop offset="0" stop-color="#fff0ea"/><stop offset="1" stop-color="#fcc6b2"/></linearGradient></defs><path d="M20.8,666.40 H30.4 Q31.5,666.40 31.5,667.50 V677.50 L27.5,681.70 H20.8 Q19.7,681.70 19.7,680.60 V667.50 Q19.7,666.40 20.8,666.40 Z" fill="url(#ig4)" stroke="#ee5a2a" stroke-width="1.15"/><path d="M22.3,670.10 H29 M22.3,673.10 H29" stroke="#f29a80" stroke-width="1.1"/><path d="M27.5,681.70 V678.70 Q27.5,677.70 28.5,677.70 H31.5 Z" fill="#e02808" stroke="#ee5a2a" stroke-width="0.6"/><path d="M1414.8,671.40 L1421.4,678.00 M1421.4,671.40 L1414.8,678.00" stroke="#a2a2a2" stroke-width="2.1"/><defs><linearGradient id="ig5" x1="0" y1="0" x2="0" y2="1"><stop offset="0" stop-color="#eaf4fd"/><stop offset="1" stop-color="#a9d2f5"/></linearGradient></defs><path d="M20.8,690.80 H30.4 Q31.5,690.80 31.5,691.90 V701.90 L27.5,706.10 H20.8 Q19.7,706.10 19.7,705.00 V691.90 Q19.7,690.80 20.8,690.80 Z" fill="url(#ig5)" stroke="#2f8fd0" stroke-width="1.15"/><path d="M22.3,694.50 H29 M22.3,697.50 H29" stroke="#5aa8dc" stroke-width="1.1"/><path d="M27.5,706.10 V703.10 Q27.5,702.10 28.5,702.10 H31.5 Z" fill="#1f6fb8" stroke="#2f8fd0" stroke-width="0.6"/><path d="M1414.8,695.80 L1421.4,702.40 M1421.4,695.80 L1414.8,702.40" stroke="#a2a2a2" stroke-width="2.1"/><defs><linearGradient id="ig6" x1="0" y1="0" x2="0" y2="1"><stop offset="0" stop-color="#eaf4fd"/><stop offset="1" stop-color="#a9d2f5"/></linearGradient></defs><path d="M20.8,715.20 H30.4 Q31.5,715.20 31.5,716.30 V726.30 L27.5,730.50 H20.8 Q19.7,730.50 19.7,729.40 V716.30 Q19.7,715.20 20.8,715.20 Z" fill="url(#ig6)" stroke="#2f8fd0" stroke-width="1.15"/><path d="M22.3,718.90 H29 M22.3,721.90 H29" stroke="#5aa8dc" stroke-width="1.1"/><path d="M27.5,730.50 V727.50 Q27.5,726.50 28.5,726.50 H31.5 Z" fill="#1f6fb8" stroke="#2f8fd0" stroke-width="0.6"/><path d="M1414.8,720.20 L1421.4,726.80 M1421.4,720.20 L1414.8,726.80" stroke="#a2a2a2" stroke-width="2.1"/><circle cx="24.7" cy="747.0" r="5.6" fill="none" stroke="#222" stroke-width="1.1"/><path d="M24.7,743.5999999999999 V750.4 M21.3,747.0 H28.1" stroke="#222" stroke-width="1.1"/></svg>
<span class="t" style="left:36.00px;top:742.00px;font-size:11px;color:#111;font-weight:bold;transform:scaleX(1.1594);">Balance: 100 000.00 USD  Equity: 100 000.65  Margin: 39.00  Free margin: 99 961.65  Margin level: 256 411.92 %</span>
<span class="t" style="left:1378.80px;top:742.00px;font-size:11.5px;color:#111;font-weight:bold;transform:scaleX(1.1482);">0.65</span>
<div style="position:absolute;left:15.2px;top:762px;width:49px;height:19.8px;background:#fff;border:1px solid #111;border-top:none;box-shadow:1px 1px 0 rgba(0,0,0,0.25);"></div>
<span class="t" style="left:27.00px;top:768.00px;font-size:11.5px;color:#111;transform:scaleX(0.9782);">Trade</span>
<span class="t" style="left:79.60px;top:768.00px;font-size:11.5px;color:#777;transform:scaleX(0.9645);">History</span>
<div style="position:absolute;left:127px;top:766px;width:1px;height:14.5px;background:#aaa;"></div>
<span class="t" style="left:139.60px;top:768.00px;font-size:11.5px;color:#777;transform:scaleX(0.9732);">Journal</span>
<div style="position:absolute;left:1052.5px;top:767.5px;width:1px;height:19px;background:#c4c4c4;"></div>
<div style="position:absolute;left:1166.0px;top:767.5px;width:1px;height:19px;background:#c4c4c4;"></div>
<div style="position:absolute;left:1242.5px;top:767.5px;width:1px;height:19px;background:#c4c4c4;"></div>
<div style="position:absolute;left:1319.0px;top:767.5px;width:1px;height:19px;background:#c4c4c4;"></div>
<div style="position:absolute;left:1395.5px;top:767.5px;width:1px;height:19px;background:#c4c4c4;"></div>
<div style="position:absolute;left:1472.0px;top:767.5px;width:1px;height:19px;background:#c4c4c4;"></div>
</div></body></html>
